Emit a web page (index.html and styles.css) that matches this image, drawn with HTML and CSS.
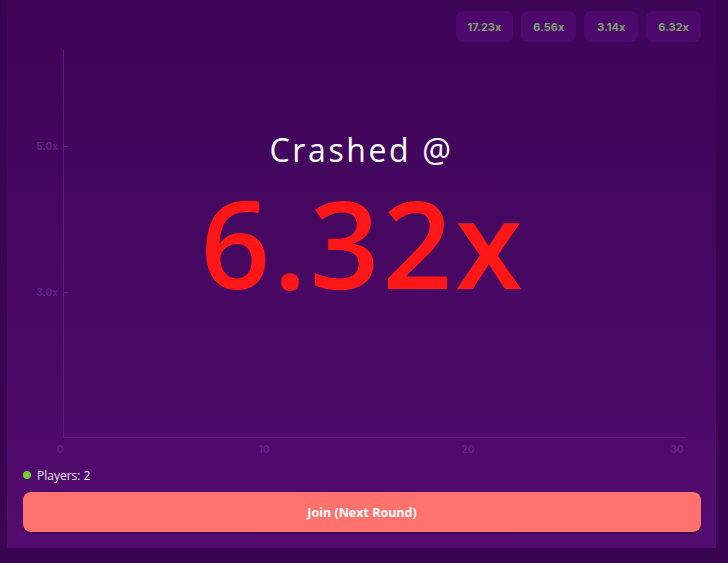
FILE: index.html
```html
<!DOCTYPE html>
<html lang="en">
<head>
<meta charset="utf-8">
<title>Crash</title>
<link rel="stylesheet" href="styles.css">
</head>
<body>
<main class="game">
  <div class="history">
    <span class="pill">17.23x</span>
    <span class="pill">6.56x</span>
    <span class="pill">3.14x</span>
    <span class="pill">6.32x</span>
  </div>

  <div class="stage">
    <svg class="chart" viewBox="0 0 709 418" width="709" height="418">
      <g class="axis">
        <line x1="56.5" y1="8" x2="56.5" y2="395"/>
        <line x1="56" y1="395.5" x2="678" y2="395.5"/>
        <line x1="56" y1="104.5" x2="61" y2="104.5"/>
        <line x1="56" y1="250.5" x2="61" y2="250.5"/>
      </g>
      <g class="ylabels">
        <text x="51" y="108">5.0x</text>
        <text x="51" y="254">3.0x</text>
      </g>
      <g class="xlabels">
        <text x="53" y="411">0</text>
        <text x="257" y="411">10</text>
        <text x="461" y="411">20</text>
        <text x="670" y="411">30</text>
      </g>
    </svg>
    <div class="result">
      <div class="result-label">Crashed @</div>
      <div class="result-value">6.32x</div>
    </div>
  </div>

  <div class="players">
    <span class="dot"></span>
    <span>Players: 2</span>
  </div>

  <button class="join" type="button">Join (Next Round)</button>
</main>
</body>
</html>
```

FILE: styles.css
```css
* { box-sizing: border-box; }

html, body {
  margin: 0;
  height: 100%;
}

body {
  background: #3a0550;
  font-family: "Open Sans", "Noto Sans", sans-serif;
  overflow: hidden;
}

.game {
  width: 709px;
  height: 548px;
  margin-left: 7px;
  padding: 11px 15px 0 16px;
  background: linear-gradient(180deg, #3f0559 0%, #450760 40%, #530b6f 100%);
  display: flex;
  flex-direction: column;
}

.history {
  display: flex;
  justify-content: flex-end;
  gap: 8px;
  height: 31px;
}

.pill {
  display: flex;
  align-items: center;
  justify-content: center;
  padding: 0 12px;
  min-width: 54px;
  border-radius: 7px;
  background: #4d0a6c;
  color: #7fa06c;
  font-family: Inter, sans-serif;
  font-weight: 700;
  font-size: 11px;
}

.stage {
  position: relative;
  height: 418px;
  margin: 0 -15px 0 -16px;
}

.chart {
  display: block;
}

.axis line {
  stroke: #5e1b7d;
  stroke-width: 1;
}

.ylabels text,
.xlabels text {
  fill: #65218a;
  font-family: Inter, sans-serif;
  font-size: 10px;
  font-weight: 700;
}

.ylabels text { text-anchor: end; }
.xlabels text { text-anchor: middle; }

.result {
  position: absolute;
  left: 0;
  right: 0;
  top: 88px;
  display: flex;
  flex-direction: column;
  align-items: center;
}

.result-label {
  color: #ffffff;
  font-family: "Open Sans", sans-serif;
  font-size: 32px;
  line-height: 40px;
  letter-spacing: 2.6px;
}

.result-value {
  color: #ff1717;
  font-family: "Open Sans", sans-serif;
  font-weight: 600;
  font-size: 122px;
  line-height: 110px;
  letter-spacing: 3px;
  margin-top: 17px;
  padding-left: 3px;
}

.players {
  display: flex;
  align-items: center;
  gap: 6px;
  height: 16px;
  margin-top: 7px;
  color: #ece3f2;
  font-size: 12px;
}

.dot {
  width: 8px;
  height: 8px;
  border-radius: 50%;
  background: #6ccd2c;
}

.join {
  margin-top: 9px;
  height: 40px;
  width: 100%;
  border: 0;
  border-radius: 8px;
  background: #ff736e;
  box-shadow: 0 2px 0 #430657;
  color: #ffffff;
  font-family: "Open Sans", sans-serif;
  font-weight: 700;
  font-size: 12.5px;
}
```
